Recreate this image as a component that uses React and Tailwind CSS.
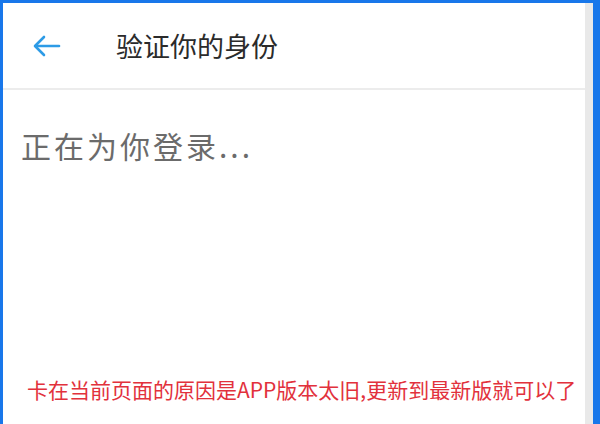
export default function App() {
  const cjk = { fontFamily: '"Noto Sans CJK SC", "Noto Sans", sans-serif' };
  return (
    <div className="w-[600px] h-[424px] bg-[#1877ea] pt-[3px] pl-[3px] pr-[7px] flex overflow-hidden" style={cjk}>
      <div className="flex-1 flex flex-col bg-white">
        <div className="h-[87px] flex items-center border-b-2 border-[#ececec]">
          <div className="w-[84px] pl-[30px] flex items-center">
            <svg width="28" height="22" viewBox="0 0 28 22" fill="none" stroke="#2d9be6" strokeWidth="2.6" strokeLinecap="round" strokeLinejoin="round">
              <path d="M26 11H3" />
              <path d="M11 2L2 11L11 20" />
            </svg>
          </div>
          <div className="pl-[29px] text-[27px] text-[#2b2b2b] leading-none">验证你的身份</div>
        </div>
        <div className="flex-1 flex flex-col">
          <div className="pt-[37px] pl-[18px] text-[30px] tracking-[3px] text-[#6b6b6b] leading-[1.2]">
            正在为你登录...
          </div>
          <div className="mt-auto pb-[21px] pl-[24px] text-[21px] text-[#e2313c] leading-[28px] whitespace-nowrap">
            卡在当前页面的原因是APP版本太旧,更新到最新版就可以了
          </div>
        </div>
      </div>
      <div className="w-[8px] bg-[#e9e9e9]" />
    </div>
  );
}
